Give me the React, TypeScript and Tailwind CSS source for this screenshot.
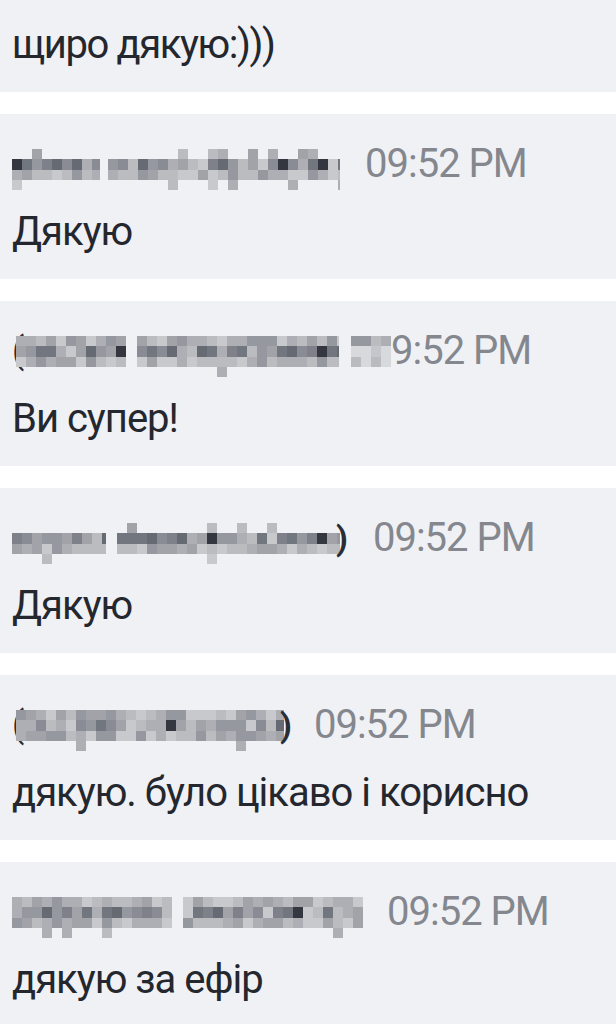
const shades = [
  "#666a73",
  "#72767f",
  "#7e818a",
  "#898c94",
  "#95989f",
  "#a1a3a9",
  "#adafb4",
  "#babcc0",
  "#c8c9cd",
];

function rng(seed: number) {
  let a = seed;
  return () => {
    a |= 0;
    a = (a + 0x6d2b79f5) | 0;
    let t = Math.imul(a ^ (a >>> 15), 1 | a);
    t = (t + Math.imul(t ^ (t >>> 7), 61 | t)) ^ t;
    return ((t ^ (t >>> 14)) >>> 0) / 4294967296;
  };
}

type Word = [number, number];

// pixelated (censored) name, drawn as a mosaic of grey cells
const Mosaic = ({
  words,
  seed,
  top = 0.15,
  light = false,
}: {
  words: Word[];
  seed: number;
  top?: number;
  light?: boolean;
}) => {
  const r = rng(seed);
  const start = words[0][0];
  const end = words[words.length - 1][1];
  const cells: { x: number; y: number; w: number; h: number; c: string }[] = [];
  const pick = () => {
    if (light) return ["#c4c6cb", "#cfd0d5", "#d8d9dd", "#b9bbc0"][Math.floor(r() * 4)];
    if (r() < 0.05) return "#343740";
    return shades[Math.floor(r() * shades.length)];
  };
  const pale = () => shades[4 + Math.floor(r() * 5)];
  words.forEach(([a, b]) => {
    for (let x = a; x < b; x += 10) {
      const w = Math.min(10, b - x);
      if (r() < top) cells.push({ x: x - start, y: 8, w, h: 10, c: top > 0.5 ? pale() : shades[5 + Math.floor(r() * 4)] });
      cells.push({ x: x - start, y: 18, w, h: 11, c: pick() });
      cells.push({ x: x - start, y: 29, w, h: 10, c: light ? pick() : pale() });
      if (!light && r() < 0.08)
        cells.push({ x: x - start, y: 39, w, h: 10, c: shades[6 + Math.floor(r() * 3)] });
    }
  });
  return (
    <svg width={end - start} height={46} className="shrink-0 overflow-visible">
      {cells.map((c, i) => (
        <rect key={i} x={c.x} y={c.y} width={c.w} height={c.h} fill={c.c} />
      ))}
    </svg>
  );
};

type Msg = {
  words: Word[];
  seed: number;
  top: number;
  text: string;
  gap: number;
  open?: boolean;
  close?: boolean;
  hiddenZero?: boolean;
};

const messages: Msg[] = [
  { words: [[12, 100], [108, 340]], seed: 3, top: 0.2, text: "Дякую", gap: 25 },
  { words: [[17, 127], [138, 340]], seed: 11, top: 1, text: "Ви супер!", gap: 12, open: true, hiddenZero: true },
  { words: [[12, 106], [117, 340]], seed: 21, top: 0.15, text: "Дякую", gap: 25, close: true },
  { words: [[16, 284]], seed: 7, top: 1, text: "дякую. було цікаво і корисно", gap: 22, open: true, close: true },
  { words: [[10, 170], [181, 361]], seed: 42, top: 1, text: "дякую за ефір", gap: 24 },
];

const Card = ({ m }: { m: Msg }) => (
  <div className="h-[165px] bg-[#f0f1f5] px-3 pt-[27px]">
    <div className="flex h-[46px] items-start">
      {m.open ? (
        <span className="-mr-[8px] w-[12px] text-[36px] leading-[46px] text-[#2a2d34]">(</span>
      ) : (
        <span style={{ width: m.words[0][0] - 12 }} />
      )}
      <Mosaic words={m.words} seed={m.seed} top={m.top} />
      {m.close && (
        <span className="-ml-[4px] text-[34px] font-bold leading-[46px] text-[#2a2d34]">)</span>
      )}
      {m.hiddenZero ? (
        <div className="flex items-start" style={{ marginLeft: m.gap }}>
          <Mosaic words={[[352, 392]]} seed={m.seed + 1} top={1} light />
          <span className="text-[40px] leading-[46px] tracking-[-1px] text-[#84878e]">9:52 PM</span>
        </div>
      ) : (
        <span
          className="text-[40px] leading-[46px] tracking-[-1px] text-[#84878e]"
          style={{ marginLeft: m.gap }}
        >
          09:52 PM
        </span>
      )}
    </div>
    <p className="mt-[22px] text-[40px] leading-[46px] tracking-[-1px] text-[#24272e]">{m.text}</p>
  </div>
);

export default function App() {
  return (
    <div
      className="h-[1024px] w-[616px] overflow-hidden bg-white"
      style={{ fontFamily: "Roboto, 'Noto Sans', sans-serif" }}
    >
      <div className="-mt-[73px] flex flex-col gap-[22px]">
        <div className="h-[165px] bg-[#f0f1f5] px-3 pt-[95px]">
          <p className="text-[40px] leading-[46px] tracking-[-1.4px] text-[#24272e]">щиро дякую:)))</p>
        </div>
        {messages.map((m, i) => (
          <Card key={i} m={m} />
        ))}
      </div>
    </div>
  );
}
